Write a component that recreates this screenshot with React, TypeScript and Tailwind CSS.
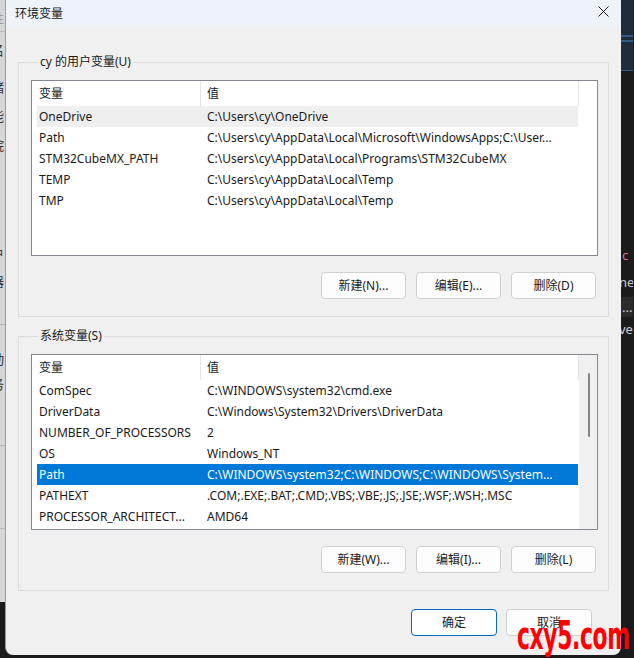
import React from "react";

const font = "font-['Noto_Sans','Noto_Sans_CJK_SC',sans-serif]";

type Row = { name: string; value: string; state?: "hover" | "selected" };

const userVars: Row[] = [
  { name: "OneDrive", value: "C:\\Users\\cy\\OneDrive", state: "hover" },
  {
    name: "Path",
    value: "C:\\Users\\cy\\AppData\\Local\\Microsoft\\WindowsApps;C:\\User...",
  },
  {
    name: "STM32CubeMX_PATH",
    value: "C:\\Users\\cy\\AppData\\Local\\Programs\\STM32CubeMX",
  },
  { name: "TEMP", value: "C:\\Users\\cy\\AppData\\Local\\Temp" },
  { name: "TMP", value: "C:\\Users\\cy\\AppData\\Local\\Temp" },
];

const systemVars: Row[] = [
  { name: "ComSpec", value: "C:\\WINDOWS\\system32\\cmd.exe" },
  { name: "DriverData", value: "C:\\Windows\\System32\\Drivers\\DriverData" },
  { name: "NUMBER_OF_PROCESSORS", value: "2" },
  { name: "OS", value: "Windows_NT" },
  {
    name: "Path",
    value: "C:\\WINDOWS\\system32;C:\\WINDOWS;C:\\WINDOWS\\System...",
    state: "selected",
  },
  {
    name: "PATHEXT",
    value: ".COM;.EXE;.BAT;.CMD;.VBS;.VBE;.JS;.JSE;.WSF;.WSH;.MSC",
  },
  { name: "PROCESSOR_ARCHITECT...", value: "AMD64" },
];

const App = () => {
  return (
    <div className={`${font} relative flex h-[658px] w-[634px] overflow-hidden bg-[#1b1b1b] text-[12px] text-[#1a1a1a]`}>
      <LeftStrip />

      {/* dialog */}
      <div className="flex h-[655px] w-[616px] flex-col overflow-hidden rounded-b-[8px] border-l border-[#9c9c9c] bg-[#f0f0f0]">
        <div className="flex h-[27px] shrink-0 items-center justify-between bg-[#eef3f9] pl-[9px] pr-[9px]">
          <span className="leading-none">环境变量</span>
          <svg width="11" height="11" viewBox="0 0 11 11" className="mt-[-4px] mr-[3px]">
            <path d="M0.5 0.5 L10.5 10.5 M10.5 0.5 L0.5 10.5" stroke="#1a1a1a" strokeWidth="1" />
          </svg>
        </div>

        <div className="flex flex-col px-[12px] pt-[27px]">
          <GroupBox label="cy 的用户变量(U)">
            <VarList rows={userVars} />
            <Buttons labels={["新建(N)...", "编辑(E)...", "删除(D)"]} />
          </GroupBox>

          <div className="h-[11px]" />

          <GroupBox label="系统变量(S)">
            <VarList rows={systemVars} scroll />
            <Buttons labels={["新建(W)...", "编辑(I)...", "删除(L)"]} />
          </GroupBox>

          <div className="mt-[18px] flex justify-end gap-[9px] pr-[17px]">
            <button className="h-[27px] w-[86px] rounded-[4px] border border-[#0067c0] bg-white">
              确定
            </button>
            <button className="h-[27px] w-[86px] rounded-[4px] border border-[#d0d0d0] bg-[#fdfdfd]">
              取消
            </button>
          </div>
        </div>
      </div>

      <RightStrip />

      {/* watermark */}
      <div className="absolute left-[517px] top-[616px] origin-top-left scale-x-[0.76] scale-y-[1.22] font-['DejaVu_Sans_Condensed','Liberation_Sans',sans-serif] text-[32px] font-bold leading-none tracking-[-0.5px] text-[#ff0000]">
        cxy5.com
      </div>
    </div>
  );
};

const GroupBox = ({
  label,
  children,
}: {
  label: string;
  children: React.ReactNode;
}) => (
  <fieldset className="w-[591px] border border-[#dcdcdc] pb-[17px] pl-[12px] pr-[10px] pt-[10px]">
    <legend className="ml-[7px] px-[2px] leading-[16px]">{label}</legend>
    {children}
  </fieldset>
);

const VarList = ({ rows, scroll = false }: { rows: Row[]; scroll?: boolean }) => (
  <div className="flex h-[176px] w-[567px] border border-[#828790] bg-white">
    <div className="flex w-[547px] flex-col">
      <div className="flex h-[25px] pl-[5px]">
        <div className="flex w-[164px] items-center border-r border-[#e5e5e5] pl-[2px]">变量</div>
        <div className="flex w-[378px] items-center border-r border-[#e5e5e5] pl-[6px]">值</div>
      </div>
      {rows.map((r) => (
        <div
          key={r.name}
          className={`ml-[5px] flex h-[21px] w-[541px] items-center whitespace-nowrap ${
            r.state === "selected"
              ? "bg-[#0078d7] text-white"
              : r.state === "hover"
                ? "bg-[#efefef]"
                : ""
          }`}
        >
          <div className="w-[170px] overflow-hidden pl-[2px]">{r.name}</div>
          <div className="flex-1 overflow-hidden">{r.value}</div>
        </div>
      ))}
    </div>
    {scroll ? (
      <div className="flex w-[18px] justify-center bg-[#f0f0f0] pt-[18px]">
        <div className="ml-[2px] h-[64px] w-[2px] rounded-full bg-[#858585]" />
      </div>
    ) : (
      <div className="w-[18px]" />
    )}
  </div>
);

const Buttons = ({ labels }: { labels: string[] }) => (
  <div className="mt-[16px] flex justify-end gap-[10px] pr-[2px]">
    {labels.map((l) => (
      <button
        key={l}
        className="h-[27px] w-[85px] rounded-[4px] border border-[#d0d0d0] bg-[#fdfdfd]"
      >
        {l}
      </button>
    ))}
  </div>
);

const LeftStrip = () => (
  <div className="flex w-[5px] shrink-0 flex-col">
    <div className="flex h-[602px] flex-col overflow-hidden bg-[#d6d6d6] text-[13px] leading-none text-[#333]">
      <div className="ml-[-9px] mt-[12px] text-[#999]">性</div>
      <div className="mt-[6px] h-px w-full bg-[#b8b8b8]" />
      <div className="ml-[-9px] mt-[12px]">名</div>
      <div className="ml-[-9px] mt-[24px]">储</div>
      <div className="ml-[-9px] mt-[16px]">能</div>
      <div className="ml-[-9px] mt-[16px]">院</div>
      <div className="ml-[-9px] mt-[96px]">户</div>
      <div className="ml-[-9px] mt-[14px]">器</div>
      <div className="mt-[36px] h-px w-full bg-[#b8b8b8]" />
      <div className="ml-[-9px] mt-[28px]">动</div>
      <div className="ml-[-9px] mt-[12px]">务</div>
      <div className="mt-[54px] h-px w-full bg-[#b8b8b8]" />
      <div className="mt-[82px] h-px w-full bg-[#b8b8b8]" />
    </div>
  </div>
);

const RightStrip = () => (
  <div className="flex w-[12px] shrink-0 flex-col overflow-hidden whitespace-nowrap text-[13px] leading-none text-[#cccccc]">
    <div className="flex h-[71px] flex-col bg-[#1f2c3d]">
      <div className="mt-[35px] h-[2px] bg-[#2e5a8a]" />
      <div className="mt-[3px] h-[2px] bg-[#2e5a8a]" />
      <div className="mt-[28px] h-[1px] bg-[#2e5a8a]" />
    </div>
    <div className="ml-[1px] mt-[178px] text-[#e06c75]">c</div>
    <div className="ml-[-2px] mt-[14px]">ne</div>
    <div className="mt-[8px] flex h-[20px] items-center bg-[#2b2b2e] pl-[1px]">...</div>
    <div className="ml-[-2px] mt-[6px]">ve</div>
  </div>
);

export default App;
